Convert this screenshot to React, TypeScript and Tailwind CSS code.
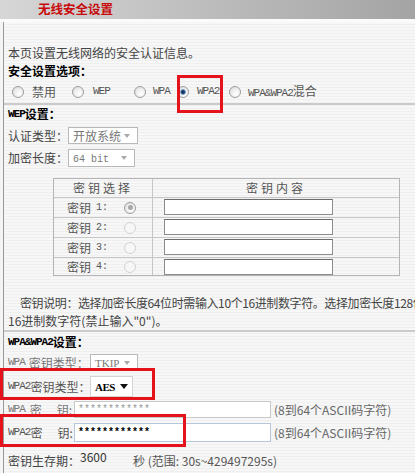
import React from "react";

const cjk = "font-['Noto_Sans_CJK_SC',sans-serif]";
const monoFont = "font-['Liberation_Mono',monospace]";
const latin = `${monoFont} text-[11px] tracking-[-1px]`;

function Radio({ checked = false, faded = false, grayDot = false }: { checked?: boolean; faded?: boolean; grayDot?: boolean }) {
  return (
    <span
      className={`w-[12px] h-[12px] rounded-full border flex items-center justify-center shrink-0 ${
        faded
          ? "border-[#d2d2d2] bg-[#f7f7f7]"
          : "border-[#9c9c9c] bg-[radial-gradient(circle_at_65%_70%,#ffffff_0%,#ececec_55%,#d6d6d6_100%)]"
      }`}
    >
      {checked && (
        <span className="w-[6px] h-[6px] rounded-full bg-[#14365e] border border-[#7fa9d6]" />
      )}
      {grayDot && <span className="w-[5px] h-[5px] rounded-full bg-[#a8a8a8]" />}
    </span>
  );
}

function Arrow({ dark = false }: { dark?: boolean }) {
  return dark ? (
    <svg width="8" height="5" viewBox="0 0 8 5">
      <path d="M0 0 H8 L4 5 Z" fill="#111" />
    </svg>
  ) : (
    <svg width="6" height="4" viewBox="0 0 6 4">
      <path d="M0 0 H6 L3 4 Z" fill="#a9a9a9" />
    </svg>
  );
}

function Select({ width, height, children, dark = false }: { width: string; height: string; children: React.ReactNode; dark?: boolean }) {
  return (
    <div className={`${width} ${height} shrink-0 flex items-center justify-between bg-white border ${dark ? "border-[#d4d4d4] pl-[4px] pr-[4px]" : "border-[#b9b9b9] pl-[4px] pr-[7px]"}`}>
      <span className="leading-none">{children}</span>
      <Arrow dark={dark} />
    </div>
  );
}

function KeyRow({ n, first = false, last = false }: { n: number; first?: boolean; last?: boolean }) {
  return (
    <div className={`flex border-t border-[#c6c6c6] ${last ? "h-[18px]" : "h-[20px]"}`}>
      <div className="w-[99px] border-r border-[#c6c6c6] flex items-center pl-[13px] pr-[16px]">
        <span className="text-[#555]">密钥</span>
        <span className={`${monoFont} text-[10px] ml-[5px] text-[#555]`}>{n}:</span>
        <span className="ml-auto">
          <Radio grayDot={first} faded={!first} />
        </span>
      </div>
      <div className="flex-1 flex items-start pt-[1px]">
        <div className="ml-[11px] w-[169px] h-[16px] bg-white border border-[#8c8c8c] border-t-[#6c6c6c]" />
      </div>
    </div>
  );
}

export default function App() {
  return (
    <div className={`relative w-[415px] h-[473px] overflow-hidden whitespace-nowrap bg-[#f4f4f4] text-[12px] text-[#444] ${cjk}`}>
      <div className="h-[19px] bg-linear-to-r from-[#d6d6d6] to-[#a4a4a4] pl-[38px] flex items-center">
        <span className="font-bold text-[#c80a0a] leading-none text-[12.5px]">无线安全设置</span>
      </div>
      <div className="h-[3px] bg-[#fbfbfb]" />

      <div className="ml-[3px] border-l border-[#9a9a9a] h-[451px] pl-[4px] bg-[image:repeating-linear-gradient(180deg,#f7f7f7_0px,#f7f7f7_2px,#efefef_2px,#efefef_3px)]">
        <div className="h-[22px]" />
        <div className="h-[18px] flex items-center">本页设置无线网络的安全认证信息。</div>
        <div className="h-[18px] flex items-center font-bold text-black">安全设置选项：</div>

        <div className="h-[23px] flex items-center">
          <div className="ml-[4px] w-[60px] shrink-0 flex items-center gap-[8px]">
            <Radio />
            <span className="text-[#555]">禁用</span>
          </div>
          <div className="w-[62px] shrink-0 flex items-center gap-[9px]">
            <Radio />
            <span className={`${latin} text-[#555]`}>WEP</span>
          </div>
          <div className="w-[43px] shrink-0 flex items-center gap-[7px]">
            <Radio />
            <span className={`${latin} text-[#555]`}>WPA</span>
          </div>
          <div className="w-[52px] shrink-0 flex items-center gap-[8px]">
            <Radio checked />
            <span className={`${latin} text-[#555]`}>WPA2</span>
          </div>
          <div className="flex items-center gap-[7px]">
            <Radio />
            <span className="text-[#555]">
              <span className={latin}>WPA&amp;WPA2</span>混合
            </span>
          </div>
        </div>
        <div className="h-[2px] -ml-[4px] bg-[#cbcbcb]" />

        <div className="h-[18px] flex items-center font-bold text-black">
          <span className={latin}>WEP</span>设置：
        </div>

        <div className="mt-[3px] h-[19px] flex items-center">
          <span className="w-[60px] shrink-0">认证类型：</span>
          <Select width="w-[70px]" height="h-[17px]">
            <span className="text-[#777]">开放系统</span>
          </Select>
        </div>
        <div className="mt-[3px] h-[19px] flex items-center">
          <span className="w-[60px] shrink-0">加密长度：</span>
          <Select width="w-[67px]" height="h-[18px]">
            <span className={`${monoFont} text-[10px] text-[#777]`}>64 bit</span>
          </Select>
        </div>

        <div className="ml-[45px] mt-[11px] w-[347px] border border-[#b4b4b4]">
          <div className="flex h-[18px]">
            <div className="w-[99px] border-r border-[#c6c6c6] flex items-center justify-center tracking-[3px] text-[#555]">密钥选择</div>
            <div className="flex-1 flex items-center justify-center tracking-[3px] text-[#555]">密钥内容</div>
          </div>
          <KeyRow n={1} first />
          <KeyRow n={2} />
          <KeyRow n={3} />
          <KeyRow n={4} last />
        </div>

        <div className="mt-[18px] h-[18px] flex items-center pl-[12px] tracking-[-0.4px]">
          密钥说明：选择加密长度64位时需输入10个16进制数字符。选择加密长度128位需输
        </div>
        <div className="h-[18px] flex items-center">16进制数字符(禁止输入"0")。</div>
        <div className="h-[2px] -ml-[4px] bg-[#cbcbcb]" />

        <div className="mt-[1px] h-[18px] flex items-center font-bold text-black">
          <span className={latin}>WPA&amp;WPA2</span>设置：
        </div>

        <div className="mt-[2px] h-[19px] flex items-center text-[#777]">
          <span className="w-[82px] shrink-0 flex items-center">
            <span className={latin}>WPA</span>
            <span className="ml-[4px]">密钥类型：</span>
          </span>
          <Select width="w-[48px]" height="h-[17px]">
            <span className="font-['Liberation_Serif',serif] text-[11px] text-[#777]">TKIP</span>
          </Select>
        </div>

        <div className="mt-[3px] h-[23px] flex items-center text-[#555]">
          <span className="w-[82px] shrink-0 flex items-center">
            <span className={latin}>WPA2</span>
            <span>密钥类型：</span>
          </span>
          <Select width="w-[43px]" height="h-[21px]" dark>
            <span className="font-['Liberation_Serif',serif] text-[11px] tracking-[-0.5px] font-bold text-black">AES</span>
          </Select>
        </div>

        <div className="mt-[2px] h-[19px] flex items-center text-[#777]">
          <span className="w-[66px] shrink-0 flex items-center">
            <span className={latin}>WPA</span>
            <span className="ml-[5px]">密</span>
            <span className="ml-[15px]">钥:</span>
          </span>
          <div className="w-[197px] h-[17px] shrink-0 bg-white border border-[#c9c9c9] flex items-center pl-[3px]">
            <span className={`${monoFont} text-[10px] text-[#9a9a9a] leading-none`}>************</span>
          </div>
          <span className="ml-[3px] text-[#666]">(8到64个ASCII码字符)</span>
        </div>

        <div className="mt-[3px] h-[21px] flex items-center text-[#555]">
          <span className="w-[66px] shrink-0 flex items-center">
            <span className={latin}>WPA2</span>
            <span>密</span>
            <span className="ml-[15px]">钥:</span>
          </span>
          <div className="w-[197px] h-[19px] shrink-0 bg-white border border-[#b6c8dc] flex items-center pl-[3px]">
            <span className={`${monoFont} text-[10px] font-bold text-black leading-none`}>************</span>
          </div>
          <span className="ml-[3px] text-[#666]">(8到64个ASCII码字符)</span>
        </div>

        <div className="mt-[9px] h-[18px] flex items-center">
          <span className="w-[72px] shrink-0">密钥生存期：</span>
          <span className="w-[53px] shrink-0 -mt-[8px] text-[#333]">3600</span>
          <span className="text-[#555]">秒 (范围: 30s~429497295s)</span>
        </div>
      </div>

      <div className="absolute left-[177px] top-[75px] w-[46px] h-[38px] border-[3px] border-[#e5121c]" />
      <div className="absolute left-0 top-[368px] w-[155px] h-[32px] border-[3px] border-[#e5121c]" />
      <div className="absolute left-0 top-[414px] w-[186px] h-[33px] border-[3px] border-[#e5121c]" />
    </div>
  );
}
